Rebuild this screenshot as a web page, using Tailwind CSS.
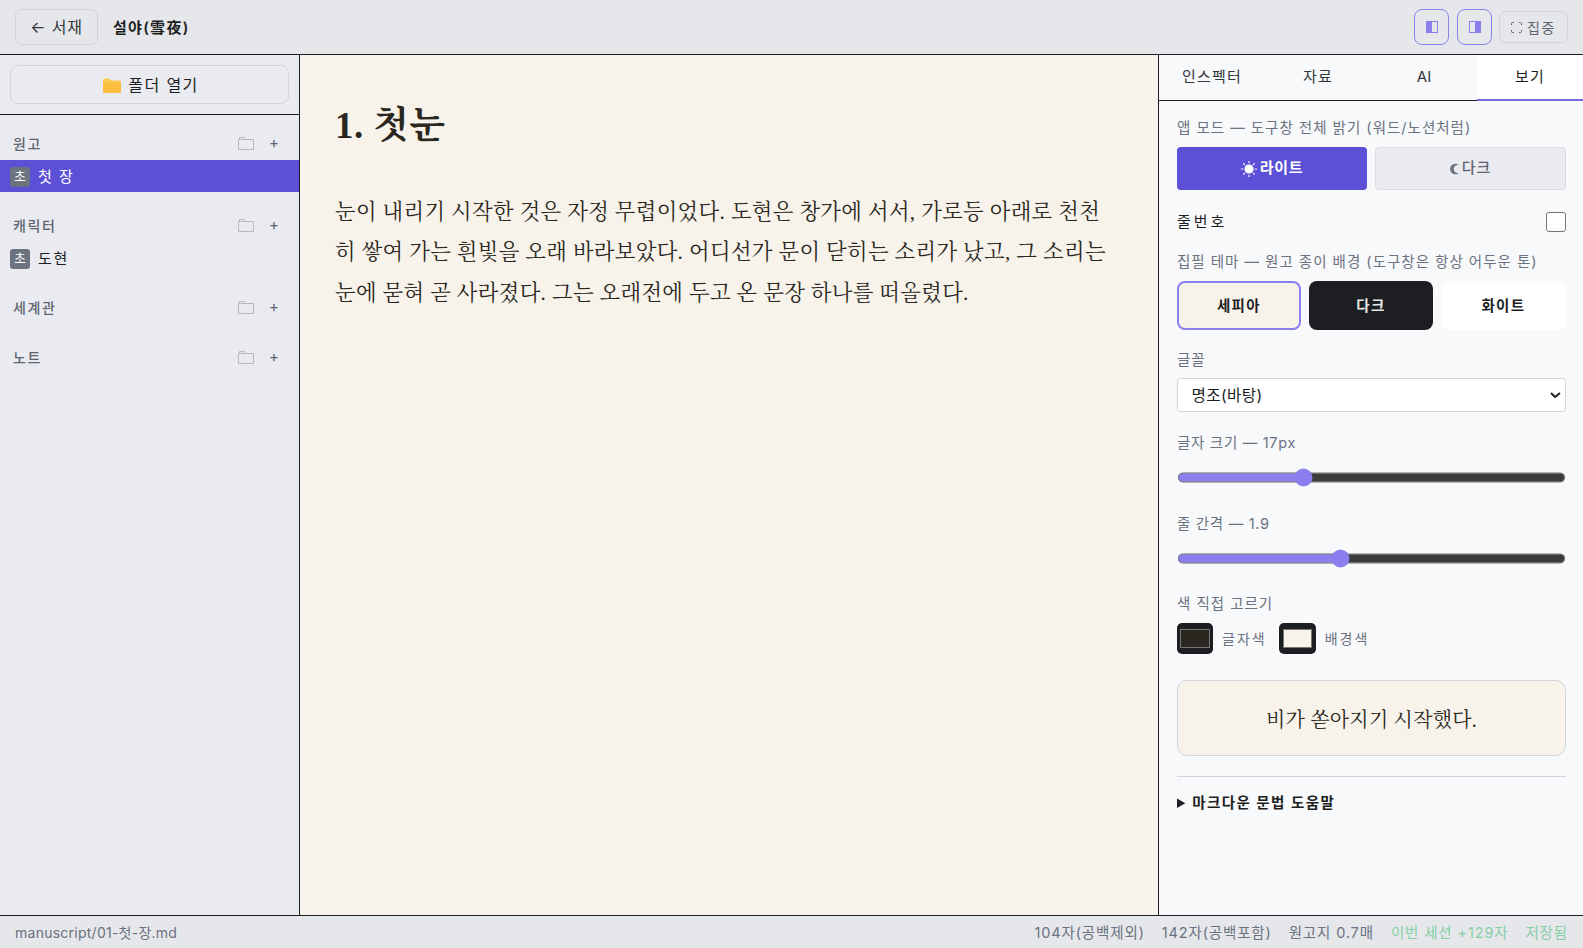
<!DOCTYPE html><html lang="ko">
<head>
  <meta charset="UTF-8" />
  <meta name="viewport" content="width=device-width, initial-scale=1.0" />
  <title>설야 - 집필</title>
  <script src="https://cdn.jsdelivr.net/npm/@tailwindcss/browser@4"></script>
</head>
<body class="bg-[#e5e7eb] text-[#1c1e22] font-['Inter','Noto_Sans_CJK_KR',sans-serif]">
  <div class="h-[948px] flex flex-col overflow-hidden">
    <!-- Top bar -->
    <header class="h-[55px] shrink-0 flex items-center justify-between pl-[15px] pr-[15px] bg-[#e5e7eb] border-b border-[#1c1e22]">
      <div class="flex items-center gap-[15px]">
        <button class="h-[36px] w-[83px] rounded-[7px] border border-[#d1d5db] text-[16px] tracking-[0.800px] text-[#33363c]">← 서재</button>
        <span class="pt-[2px] text-[15px] tracking-[1.300px] font-semibold">설야(雪夜)</span>
      </div>
      <div class="flex items-center gap-[8px]">
        <button class="w-[35px] h-[36px] rounded-[8px] border border-[#8b7ff0] flex items-center justify-center">
          <svg width="12" height="12" viewBox="0 0 12 12"><rect width="12" height="12" fill="#8b7ff0"/><rect x="6" y="1" width="5" height="10" fill="#e5e7eb"/></svg>
        </button>
        <button class="w-[35px] h-[36px] rounded-[8px] border border-[#8b7ff0] flex items-center justify-center">
          <svg width="12" height="12" viewBox="0 0 12 12"><rect width="12" height="12" fill="#8b7ff0"/><rect x="1" y="1" width="5" height="10" fill="#e5e7eb"/></svg>
        </button>
        <button class="-ml-px w-[69px] h-[32px] rounded-[7px] border border-[#d1d5db] flex items-center justify-center gap-[5px] text-[14px] tracking-[1.700px] text-[#5f6570]">
          <svg width="11" height="11" viewBox="0 0 11 11" fill="none" stroke="#5f6570" stroke-width="1"><path d="M.5 3V1.5a1 1 0 0 1 1-1H3M8 .5h1.5a1 1 0 0 1 1 1V3M10.500 8v1.500a1 1 0 0 1-1 1H8M3 10.500H1.500a1 1 0 0 1-1-1V8"/></svg>
          집중
        </button>
      </div>
    </header>

    <div class="flex-1 flex min-h-0">
      <!-- Left sidebar -->
      <aside class="w-[300px] shrink-0 bg-[#e9ebf0] border-r border-[#1c1e22] flex flex-col">
        <div class="h-[60px] shrink-0 px-[10px] pt-[10px] border-b border-[#1c1e22]">
          <button class="w-[279px] h-[39px] pt-[1px] pl-[3px] rounded-[8px] border border-[#d1d5db] flex items-center justify-center gap-[7px] text-[16px] tracking-[1.400px] text-[#1c1e22]">
            <svg width="18" height="15" viewBox="0 0 18 15"><path d="M0 2a1.500 1.500 0 0 1 1.500-1.500h4.500l2 2h8.500A1.500 1.500 0 0 1 18 4v9.500a1.500 1.500 0 0 1-1.500 1.500h-15A1.500 1.500 0 0 1 0 13.500z" fill="#fdc94f"/><path d="M0 4.500h18v9a1.500 1.500 0 0 1-1.500 1.500h-15A1.500 1.500 0 0 1 0 13.500z" fill="#fbbf3f"/></svg>
            폴더 열기
          </button>
        </div>

        <section class="mt-[16px]">
          <div class="h-[24px] mb-[5px] flex items-center justify-between pl-[13px] pr-[22px] text-[#5f6570]">
            <span class="text-[14px] tracking-[1.600px] font-medium">원고</span>
            <span class="flex items-center gap-[15px]">
              <svg width="16" height="13" viewBox="0 0 16 13" fill="none" stroke="#b5b8bf"><path d="M.5 12.500V2.500h15v10zM1.500 2.500V.500h5l1 2"/></svg>
              <span class="text-[15px] w-[8px]">+</span>
            </span>
          </div>
          <div class="h-[32px] pt-[2px] flex items-center gap-[8px] pl-[10px] bg-[#5b50d6] text-white">
            <span class="w-[20px] h-[20px] rounded-[3px] bg-[#6b7280] text-[13px] flex items-center justify-center">초</span>
            <span class="text-[15px] tracking-[1.500px]">첫 장</span>
          </div>
        </section>

        <section class="mt-[21px]">
          <div class="h-[24px] mb-[5px] flex items-center justify-between pl-[13px] pr-[22px] text-[#5f6570]">
            <span class="text-[14px] tracking-[1.600px] font-medium">캐릭터</span>
            <span class="flex items-center gap-[15px]">
              <svg width="16" height="13" viewBox="0 0 16 13" fill="none" stroke="#b5b8bf"><path d="M.5 12.500V2.500h15v10zM1.500 2.500V.500h5l1 2"/></svg>
              <span class="text-[15px] w-[8px]">+</span>
            </span>
          </div>
          <div class="h-[32px] pt-[2px] flex items-center gap-[8px] pl-[10px]">
            <span class="w-[20px] h-[20px] rounded-[3px] bg-[#6b7280] text-white text-[13px] flex items-center justify-center">초</span>
            <span class="text-[15px] tracking-[1.800px]">도현</span>
          </div>
        </section>

        <section class="mt-[21px]">
          <div class="h-[24px] mb-[5px] flex items-center justify-between pl-[13px] pr-[22px] text-[#5f6570]">
            <span class="text-[14px] tracking-[1.600px] font-medium">세계관</span>
            <span class="flex items-center gap-[15px]">
              <svg width="16" height="13" viewBox="0 0 16 13" fill="none" stroke="#b5b8bf"><path d="M.5 12.500V2.500h15v10zM1.500 2.500V.500h5l1 2"/></svg>
              <span class="text-[15px] w-[8px]">+</span>
            </span>
          </div>
        </section>

        <section class="mt-[21px]">
          <div class="h-[24px] mb-[5px] flex items-center justify-between pl-[13px] pr-[22px] text-[#5f6570]">
            <span class="text-[14px] tracking-[1.600px] font-medium">노트</span>
            <span class="flex items-center gap-[15px]">
              <svg width="16" height="13" viewBox="0 0 16 13" fill="none" stroke="#b5b8bf"><path d="M.5 12.500V2.500h15v10zM1.500 2.500V.500h5l1 2"/></svg>
              <span class="text-[15px] w-[8px]">+</span>
            </span>
          </div>
        </section>
      </aside>

      <!-- Editor -->
      <main class="flex-1 bg-[#f7f3eb] pl-[35px] pr-[46px] pt-[41px] text-[#2a2620] font-['Liberation_Serif','Noto_Serif_CJK_KR','Noto_Sans_CJK_KR',serif]">
        <h1 class="text-[37px] leading-[60px] font-bold tracking-[0.400px]">1. 첫눈</h1>
        <p class="mt-[36px] text-[21.300px] leading-[40.400px] tracking-[0.370px]">눈이 내리기 시작한 것은 자정 무렵이었다. 도현은 창가에 서서, 가로등 아래로 천천히 쌓여 가는 흰빛을 오래 바라보았다. 어디선가 문이 닫히는 소리가 났고, 그 소리는 눈에 묻혀 곧 사라졌다. 그는 오래전에 두고 온 문장 하나를 떠올렸다.</p>
      </main>

      <!-- Right panel -->
      <aside class="w-[425px] shrink-0 bg-[#f8f9fb] border-l border-[#1c1e22] flex flex-col">
        <nav class="h-[46px] shrink-0 grid grid-cols-4 border-b border-[#1c1e22] text-[15px] tracking-[1.200px] text-center">
          <button class="text-[#33363c]">인스펙터</button>
          <button class="text-[#33363c]">자료</button>
          <button class="text-[#33363c] tracking-normal">AI</button>
          <button class="bg-white border-b-2 border-[#7468e6] -mb-px">보기</button>
        </nav>

        <div class="pl-[18px] pr-[17px] pt-[17px]">
          <p class="text-[14.500px] leading-[20px] tracking-[1px] text-[#6b7280]">앱 모드 — 도구창 전체 밝기 (워드/노션처럼)</p>
          <div class="mt-[9px] grid grid-cols-[190px_1fr] gap-[8px]">
            <button class="h-[43px] rounded-[4px] bg-[#5b50d6] text-white text-[15px] tracking-[0.700px] font-semibold flex items-center justify-center gap-[3px]">
              <svg width="16" height="16" viewBox="0 0 14 14" fill="white" stroke="white"><circle cx="7" cy="7" r="3.500"/><path d="M7 0v2M7 12v2M0 7h2M12 7h2M2 2l1.500 1.500M10.500 10.500L12 12M12 2l-1.500 1.500M3.500 10.500L2 12"/></svg>
              라이트
            </button>
            <button class="h-[43px] rounded-[4px] bg-[#e9ebf0] border border-[#d9dbe1] text-[#5f6570] text-[15px] tracking-[1px] font-medium flex items-center justify-center gap-[3px]">
              <svg width="9" height="12" viewBox="0 0 11 14"><path d="M10.900 2.200A6.500 6.500 0 1 0 10.900 11.800 5 5 0 1 1 10.900 2.200z" fill="#6b7280"/></svg>
              다크
            </button>
          </div>

          <label class="mt-[9px] h-[46px] flex items-center justify-between text-[15px] tracking-[3px]">
            <span>줄번호</span>
            <input type="checkbox" class="appearance-none w-[20px] h-[20px] rounded-[3px] bg-white border border-[#767676]" />
          </label>

          <p class="mt-[7px] text-[14.500px] leading-[20px] tracking-[1px] text-[#6b7280]">집필 테마 — 원고 종이 배경 (도구창은 항상 어두운 톤)</p>
          <div class="mt-[9px] grid grid-cols-[124px_124px_1fr] gap-[8px]">
            <button class="h-[49px] rounded-[8px] bg-[#f7f3eb] border-2 border-[#8b7ff0] text-[14.500px] tracking-[1.400px] font-semibold">세피아</button>
            <button class="h-[49px] rounded-[8px] bg-[#1c1e22] text-[#e7e7e7] text-[14.500px] tracking-[1.400px] font-semibold">다크</button>
            <button class="h-[49px] rounded-[8px] bg-white text-[14.500px] tracking-[1.400px] font-semibold">화이트</button>
          </div>

          <p class="mt-[20px] text-[14.500px] leading-[20px] tracking-[1px] text-[#6b7280]">글꼴</p>
          <select class="mt-[6.700px] [zoom:1.2] w-full h-[28.400px] pl-[8px] rounded-[3px] bg-white border border-[#d1d5db] text-[13px] tracking-[0.3px]">
            <option>명조(바탕)</option>
          </select>

          <p class="mt-[21px] text-[14.500px] leading-[20px] tracking-[0.7px] text-[#6b7280]">글자 크기 — 17px</p>
          <input type="range" min="12" max="27.8" step="0.1" value="17" class="mt-[12.500px] [zoom:1.2] block w-full h-[16px] accent-[#8b7ff0] [color-scheme:dark]" />

          <p class="mt-[27px] text-[14.500px] leading-[20px] tracking-[0.7px] text-[#6b7280]">줄 간격 — 1.9</p>
          <input type="range" min="1.4" max="2.6" step="0.1" value="1.9" class="mt-[12.500px] [zoom:1.2] block w-full h-[16px] accent-[#8b7ff0] [color-scheme:dark]" />

          <p class="mt-[26px] text-[14.500px] leading-[20px] tracking-[1px] text-[#6b7280]">색 직접 고르기</p>
          <div class="mt-[9px] flex items-center text-[14px] tracking-[2px] text-[#6b7280]">
            <span class="w-[36px] h-[31px] rounded-[5px] bg-[#1c1e22] px-[3px] py-[6px] flex"><span class="flex-1 bg-[#2a2620] border border-[#767676]"></span></span>
            <span class="ml-[9px]">글자색</span>
            <span class="ml-[12px] w-[37px] h-[31px] rounded-[5px] bg-[#1c1e22] px-[4px] py-[6px] flex"><span class="flex-1 bg-[#f7f3eb] border border-[#767676]"></span></span>
            <span class="ml-[9px]">배경색</span>
          </div>

          <div class="mt-[26px] h-[76px] pt-[3px] rounded-[10px] bg-[#f7f3eb] border border-[#d1d5db] flex items-center justify-center text-[20px] tracking-[0.200px] text-[#2a2620] font-['Liberation_Serif','Noto_Serif_CJK_KR','Noto_Sans_CJK_KR',serif]">비가 쏟아지기 시작했다.</div>

          <hr class="mt-[20px] border-[#d1d5db]" />

          <details class="mt-[15px] text-[14.500px] tracking-[1.400px] font-semibold">
            <summary>마크다운 문법 도움말</summary>
          </details>
        </div>
      </aside>
    </div>

    <!-- Status bar -->
    <footer class="h-[33px] pt-[1px] shrink-0 flex items-center justify-between pl-[15px] pr-[15px] bg-[#e5e7eb] border-t border-[#1c1e22] text-[14px] text-[#6b7280]">
      <span class="tracking-[0.250px]">manuscript/01-첫-장.md</span>
      <div class="flex items-center gap-[17px] text-[14.500px] tracking-[0.850px]">
        <span>104자(공백제외)</span>
        <span>142자(공백포함)</span>
        <span>원고지 0.7매</span>
        <span class="text-[#86cfa5]">이번 세션 +129자</span>
        <span class="text-[#86cfa5]">저장됨</span>
      </div>
    </footer>
  </div>
</body>
</html>
